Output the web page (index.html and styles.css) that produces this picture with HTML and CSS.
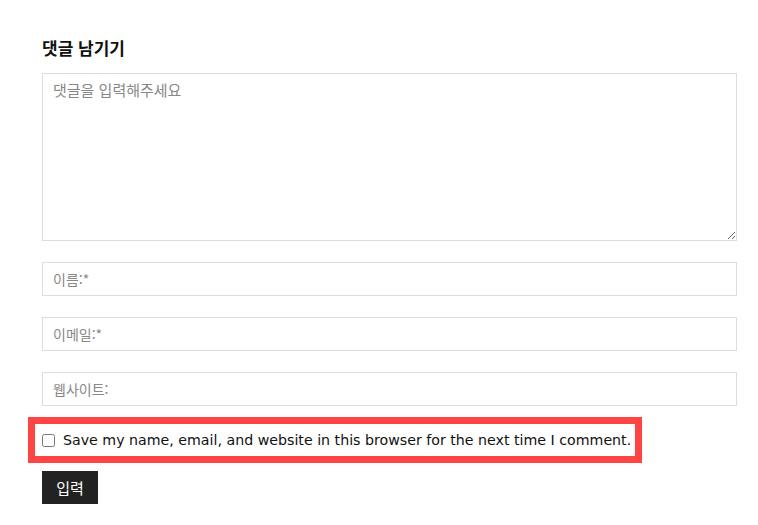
FILE: index.html
```html
<!DOCTYPE html>
<html lang="ko">
<head>
  <meta charset="UTF-8">
  <meta name="viewport" content="width=device-width, initial-scale=1.0">
  <title>댓글 남기기</title>
  <link rel="stylesheet" href="styles.css">
</head>
<body>
  <div class="respond">
    <h3 class="reply-title">댓글 남기기</h3>
    <form class="comment-form">
      <p class="field">
        <textarea id="comment" placeholder="댓글을 입력해주세요"></textarea>
      </p>
      <p class="field">
        <input type="text" id="author" placeholder="이름:*">
      </p>
      <p class="field">
        <input type="text" id="email" placeholder="이메일:*">
      </p>
      <p class="field">
        <input type="text" id="url" placeholder="웹사이트:">
      </p>
      <p class="cookies">
        <input type="checkbox" id="cookies-consent">
        <label for="cookies-consent">Save my name, email, and website in this browser for the next time I comment.</label>
      </p>
      <p class="submit-row">
        <button type="button" class="submit">입력</button>
      </p>
    </form>
  </div>
</body>
</html>
```

FILE: styles.css
```css
body {
  margin: 0;
  padding: 0;
  background: #ffffff;
  font-family: "Noto Sans CJK KR", "Noto Sans", sans-serif;
  color: #222;
}
.respond {
  padding: 36px 21px 0 42px;
}
.reply-title {
  margin: 0 0 13px;
  font-size: 17px;
  line-height: 24px;
  font-weight: bold;
  color: #111;
}
.comment-form p {
  margin: 0;
}
.comment-form .field {
  margin-bottom: 21px;
}
textarea,
input[type="text"] {
  display: block;
  width: 100%;
  box-sizing: border-box;
  border: 1px solid #dddddd;
  border-radius: 0;
  background: #fff;
  font-family: "Noto Sans CJK KR", sans-serif;
  color: #333;
  outline: none;
}
textarea {
  height: 168px;
  padding: 5px 10px;
  font-size: 15px;
  resize: vertical;
}
input[type="text"] {
  height: 34px;
  padding: 0 10px;
  font-size: 14px;
}
textarea::placeholder,
input[type="text"]::placeholder {
  color: #888;
}
.comment-form .cookies {
  display: flex;
  align-items: center;
  gap: 8px;
  width: fit-content;
  margin: -10px 0 0 -14px;
  padding: 7px 4px 7px 7px;
  border: 7px solid #ff4444;
}
.cookies input {
  width: 13px;
  height: 13px;
  margin: 0;
}
.cookies label {
  font-family: "DejaVu Sans", Verdana, sans-serif;
  font-size: 14.2px;
  line-height: 18px;
  color: #111;
}
.comment-form .submit-row {
  margin-top: 8px;
}
.submit {
  display: block;
  width: 56px;
  height: 33px;
  padding: 0;
  border: none;
  border-radius: 0;
  background: #222;
  color: #fff;
  font-family: "Noto Sans CJK KR", sans-serif;
  font-size: 15px;
  cursor: pointer;
}
```
